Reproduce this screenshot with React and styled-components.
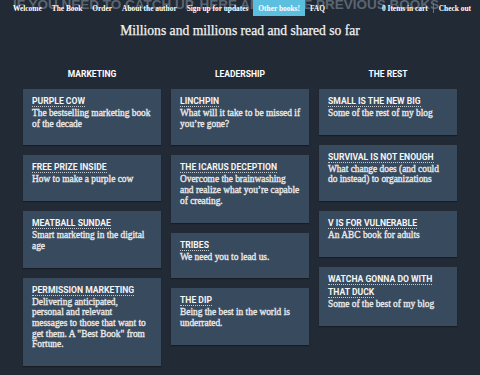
import React from "react";
import styled, { createGlobalStyle } from "styled-components";

const GlobalStyle = createGlobalStyle`
	html, body {
		margin: 0;
		padding: 0;
		background: #222a35;
		overflow: hidden;
	}
	* {
		box-sizing: border-box;
	}
`;

const Page = styled.div`
	width: 480px;
	height: 375px;
	background: #222a35; // dark slate
	color: #ececec;
`;

const Header = styled.header`
	display: grid;
	height: 16px;
`;

const Banner = styled.div`
	grid-area: 1 / 1;
	margin: -2px 0 0 13px;
	font-family: "Liberation Sans", Arial, sans-serif;
	font-weight: bold;
	font-size: 13.5px;
	line-height: 13.5px;
	color: #5b6572;
	white-space: nowrap;
`;

const Nav = styled.nav`
	grid-area: 1 / 1;
	display: flex;
	justify-content: space-between;
	align-items: stretch;
	padding: 0 4px 0 8px;
	height: 16px;
	font-family: "Liberation Serif", "Times New Roman", serif;
	font-weight: bold;
	font-size: 7.4px;
	color: #ffffff;
`;

const NavGroup = styled.div`
	display: flex;
	align-items: stretch;
`;

const NavItem = styled.a`
	display: flex;
	align-items: center;
	padding: 0 5px;
	color: #ffffff;
	text-decoration: none;
	white-space: nowrap;
	background: ${({ active }) => (active ? "#5cbfdf" : "transparent")}; // sky blue
	border-left: ${({ divided }) => (divided ? "1px solid #6b7480" : "none")};
	margin: ${({ divided }) => (divided ? "3px 0" : "0")};
`;

const Heading = styled.h1`
	margin: 6px 0 0;
	text-align: center;
	font-family: "Liberation Serif", "Times New Roman", serif;
	font-weight: normal;
	font-size: 13.6px;
	line-height: 18px;
	color: #f2f2f2;
	-webkit-text-stroke: 0.25px #f2f2f2;
`;

const Columns = styled.div`
	display: grid;
	grid-template-columns: repeat(3, 138px);
	column-gap: 10px;
	justify-content: center;
	margin-top: 28px;
`;

const Column = styled.section`
	display: flex;
	flex-direction: column;
	gap: 10px;
`;

const ColumnTitle = styled.h2`
	margin: 0 0 -1px;
	text-align: center;
	font-family: Roboto, "Liberation Sans", sans-serif;
	font-weight: bold;
	font-size: 8.5px;
	line-height: 12px;
	color: #ffffff;
	text-transform: uppercase;
`;

const Card = styled.article`
	background: #384a5e; // steel card
	padding: 6px 7px 16px 9px;
	box-shadow: 0 1px 1px rgba(0, 0, 0, 0.3);
`;

const CardTitle = styled.div`
	font-family: Roboto, "Liberation Sans", sans-serif;
	font-weight: bold;
	font-size: 8.6px;
	line-height: 13px;
	color: #f4f4f4;
	text-transform: uppercase;

	span {
		border-bottom: 1px dotted rgba(255, 255, 255, 0.7);
	}
`;

const CardText = styled.p`
	margin: 0;
	font-family: "Liberation Serif", "Times New Roman", serif;
	font-size: 9.4px;
	line-height: 10.7px;
	color: #e8e8e8;
	white-space: pre-line;
	-webkit-text-stroke: 0.35px #e8e8e8;
`;

const columns = [
	{
		title: "Marketing",
		books: [
			{ name: "Purple Cow", text: "The bestselling marketing book\nof the decade" },
			{ name: "Free Prize Inside", text: "How to make a purple cow" },
			{ name: "Meatball Sundae", text: "Smart marketing in the digital\nage" },
			{
				name: "Permission Marketing",
				text: "Delivering anticipated,\npersonal and relevant\nmessages to those that want to\nget them. A \"Best Book\" from\nFortune.",
			},
		],
	},
	{
		title: "Leadership",
		books: [
			{ name: "Linchpin", text: "What will it take to be missed if\nyou’re gone?" },
			{
				name: "The Icarus Deception",
				text: "Overcome the brainwashing\nand realize what you’re capable\nof creating.",
			},
			{ name: "Tribes", text: "We need you to lead us." },
			{ name: "The Dip", text: "Being the best in the world is\nunderrated." },
		],
	},
	{
		title: "The Rest",
		books: [
			{ name: "Small is the new big", text: "Some of the rest of my blog" },
			{
				name: "Survival is not enough",
				text: "What change does (and could\ndo instead) to organizations",
			},
			{ name: "V is for vulnerable", text: "An ABC book for adults" },
			{ name: "Watcha gonna do with that duck", text: "Some of the best of my blog" },
		],
	},
];

const App = () => {
	return (
		<Page>
			<GlobalStyle />
			<Header>
				<Banner>IF YOU NEED TO CATCH UP, HERE ARE SOME PREVIOUS BOOKS</Banner>
				<Nav>
					<NavGroup>
						<NavItem>Welcome</NavItem>
						<NavItem>The Book</NavItem>
						<NavItem>Order</NavItem>
						<NavItem>About the author</NavItem>
						<NavItem>Sign up for updates</NavItem>
						<NavItem active>Other books!</NavItem>
						<NavItem>FAQ</NavItem>
					</NavGroup>
					<NavGroup>
						<NavItem>0 Items in cart</NavItem>
						<NavItem divided>Check out</NavItem>
					</NavGroup>
				</Nav>
			</Header>
			<Heading>Millions and millions read and shared so far</Heading>
			<Columns>
				{columns.map((col) => (
					<Column key={col.title}>
						<ColumnTitle>{col.title}</ColumnTitle>
						{col.books.map((book) => (
							<Card key={book.name}>
								<CardTitle>
									<span>{book.name}</span>
								</CardTitle>
								<CardText>{book.text}</CardText>
							</Card>
						))}
					</Column>
				))}
			</Columns>
		</Page>
	);
};

export default App;
